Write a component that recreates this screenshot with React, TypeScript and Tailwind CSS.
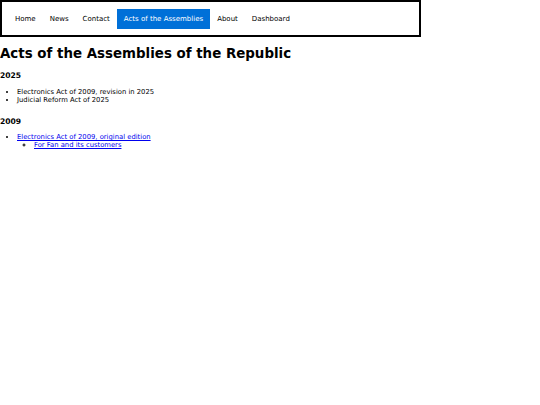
import React from "react";

export default function App() {
  const items = ["Home", "News", "Contact", "Acts of the Assemblies", "About", "Dashboard"];
  return (
    <div className="bg-white min-h-[405px] text-black text-[6.8px] leading-[8px]" style={{ fontFamily: '"DejaVu Sans", Verdana, sans-serif' }}>
      <nav className="w-[421px] h-[37px] border-2 border-black flex items-center px-[6px]">
        <ul className="flex items-center">
          {items.map((it) => (
            <li key={it}>
              <a
                href="#"
                className={
                  "block px-[7px] py-[6px] text-[7px] leading-[8px] " +
                  (it === "Acts of the Assemblies" ? "bg-[#0070d8] text-white" : "text-black")
                }
              >
                {it}
              </a>
            </li>
          ))}
        </ul>
      </nav>
      <h1 className="text-[13.4px] leading-[16px] font-bold mt-[9px] mb-[9px]">Acts of the Assemblies of the Republic</h1>
      <h3 className="text-[7.6px] leading-[9px] font-bold mt-[8px] mb-[8px]">2025</h3>
      <ul className="list-disc pl-[17px]">
        <li>Electronics Act of 2009, revision in 2025</li>
        <li>Judicial Reform Act of 2025</li>
      </ul>
      <h3 className="text-[7.6px] leading-[9px] font-bold mt-[13px] mb-[7px]">2009</h3>
      <ul className="list-disc pl-[17px]">
        <li>
          <a href="#" className="text-[#0000ee] underline">Electronics Act of 2009, original edition</a>
          <ul className="[list-style-type:circle] pl-[17px]">
            <li>
              <a href="#" className="text-[#0000ee] underline">For Fan and its customers</a>
            </li>
          </ul>
        </li>
      </ul>
    </div>
  );
}
